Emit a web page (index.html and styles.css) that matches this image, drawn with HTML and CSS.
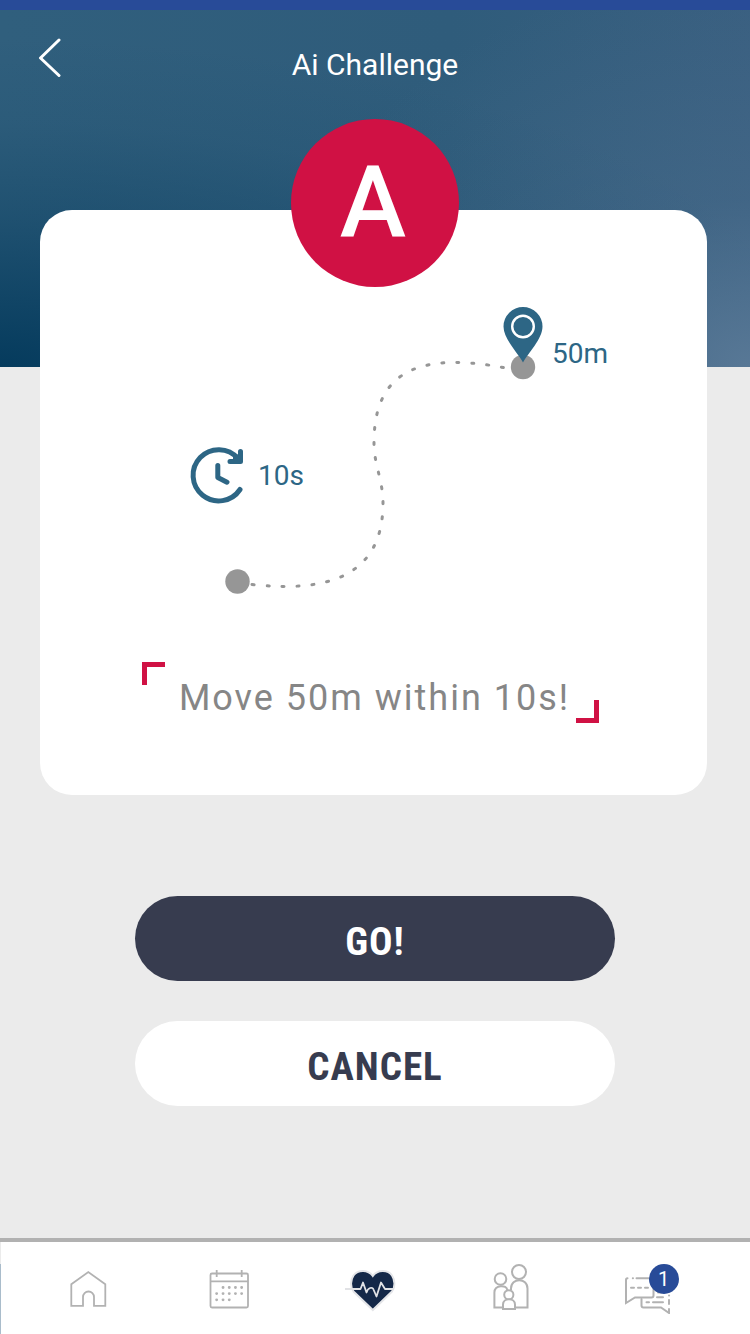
FILE: index.html
```html
<!DOCTYPE html>
<html lang="en">
<head>
<meta charset="utf-8">
<meta name="viewport" content="width=device-width, initial-scale=1">
<title>Ai Challenge</title>
<link rel="stylesheet" href="styles.css">
</head>
<body>
<div class="page">
  <header class="header">
    <button class="back" type="button" aria-label="Back">
      <svg width="24" height="40" viewBox="0 0 24 40"><path d="M22 2 3.500 20 22 37.500" fill="none" stroke="#fff" stroke-width="3" stroke-linecap="round" stroke-linejoin="round"/></svg>
    </button>
    <h1 class="title">Ai Challenge</h1>
  </header>

  <main class="main">
    <div class="grade">A</div>
    <section class="card">
      <svg class="route" viewBox="40 290 667 310" role="img" aria-label="Route of 50m in 10s">
        <path class="route-line" d="M252 584.500C330 593 383 575 383 503C383 480 374 465 374 443C374 385 402 347 508 368.500"/>
        <circle class="route-stop" cx="237.500" cy="581.500" r="12.200"/>
        <circle class="route-stop" cx="523" cy="367" r="12.200"/>
        <path class="accent-fill" d="M523 362.500C518 353 503.500 339 503.500 326.500A19.500 19.500 0 0 1 542.500 326.500C542.500 339 528 353 523 362.500Z"/>
        <circle cx="523" cy="326.500" r="10.800" fill="none" stroke="#fff" stroke-width="2.400"/>
        <g class="accent-line">
          <path d="M240 489.500A25.600 25.600 0 1 1 238 458.500"/>
          <path d="M240.500 451.500V461.500H230"/>
          <path d="M217.800 465.500V477.500L227 482.200"/>
        </g>
        <path class="accent-fill" d="M233 456 242 453V463H233Z"/>
        <text class="route-label" x="552" y="363">50m</text>
        <text class="route-label" x="258" y="485">10s</text>
      </svg>
      <p class="goal">
        <span class="corner corner-start"></span>
        <span class="goal-text">Move 50m within 10s!</span>
        <span class="corner corner-end"></span>
      </p>
    </section>
    <div class="actions">
      <button class="button button-primary" type="button">GO!</button>
      <button class="button button-plain" type="button">CANCEL</button>
    </div>
  </main>

  <nav class="nav">
    <a class="nav-item" href="#home" aria-label="Home">
      <svg width="50" height="50" viewBox="63 1264 50 50" class="icon"><path d="M71.300 1284.300 88.300 1272 105.300 1284.300V1305.800H94V1297A5.500 5.500 0 0 0 83 1297V1305.800H71.300Z"/></svg>
    </a>
    <a class="nav-item" href="#calendar" aria-label="Calendar">
      <svg width="50" height="50" viewBox="204 1264 50 50" class="icon">
        <rect x="210.500" y="1273.500" width="37.500" height="34" rx="1.500"/>
        <path d="M210.500 1281.300H248M216.700 1270V1277M241.700 1270V1277"/>
        <path class="dots" d="M223 1287.500h.1M229.200 1287.500h.1M235.400 1287.500h.1M241.600 1287.500h.1M216.600 1293.600h.1M223 1293.600h.1M229.200 1293.600h.1M235.400 1293.600h.1M241.600 1293.600h.1M216.600 1299.800h.1M223 1299.800h.1M229.200 1299.800h.1"/>
      </svg>
    </a>
    <a class="nav-item" href="#challenge" aria-label="Challenge" aria-current="page">
      <svg width="54" height="50" viewBox="343 1264 54 50">
        <path d="M372.800 1310 353.500 1291.500C350 1287 350.500 1280 353.500 1275.500C358 1269.500 368 1269.500 372.800 1276C377.500 1269.500 388 1269.500 392 1275.500C395 1280 395.500 1287 392 1291.500Z" fill="#142848" stroke="#e4e5e8" stroke-width="2"/>
        <path d="M345 1289H360.500L363 1282.500 366.500 1292.500C368 1287.500 372.500 1286.500 373.500 1289.500L376.500 1296.500 381 1282.500 385 1289H394" fill="none" stroke="#e1e2e5" stroke-width="1.800" stroke-linejoin="round"/>
      </svg>
    </a>
    <a class="nav-item" href="#family" aria-label="Family">
      <svg width="50" height="50" viewBox="486 1264 50 50" class="icon">
        <g>
          <circle cx="500.500" cy="1279" r="5.800"/>
          <circle cx="519" cy="1272" r="7"/>
          <path d="M503 1307.500H494.400V1292.500C494.400 1284.500 507 1284.500 507.300 1290M515.500 1307.500H527.500V1288.500C527.500 1277.500 511 1277.500 511 1288.500V1290"/>
          <circle cx="508.800" cy="1294.800" r="4.600" fill="#fff"/>
          <path fill="#fff" d="M503 1309V1304.500C503 1297.500 515 1297.500 515 1304.500V1309Z"/>
        </g>
      </svg>
    </a>
    <a class="nav-item" href="#messages" aria-label="Messages">
      <span class="chat">
        <svg width="56" height="50" viewBox="624 1264 56 50" class="icon">
          <g stroke-linecap="round">
            <path d="M627.500 1278.300Q626 1278.300 626 1280V1303L635 1297.500H651.500Q653.500 1297.500 653.500 1295.500V1287M632.800 1278.300h.2M636.500 1278.300H650"/>
            <path d="M631 1287.700h3M638 1287.700h3M645 1287.700h3"/>
            <path d="M641.500 1299V1305.500Q641.500 1307.500 643.500 1307.500H661L669 1313V1309M669 1304V1300M669 1295.500h.1M658 1292.500H662M668.500 1292V1290"/>
            <path d="M657 1297.300H663M646.500 1302.300H649M653 1302.300H663"/>
          </g>
        </svg>
        <span class="badge">1</span>
      </span>
    </a>
  </nav>
</div>
</body>
</html>
```
FILE: styles.css
```css
* {
  box-sizing: border-box;
}

body {
  margin: 0;
  font-family: Roboto, "Liberation Sans", sans-serif;
  background: #ebebeb;
}

.page {
  display: flex;
  flex-direction: column;
  min-height: 100vh;
  border-top: 10px solid #284b98;
  background:
    radial-gradient(ellipse 64% 400px at 100% 357px, #587896, rgba(88, 120, 150, 0.26) 42%, rgba(88, 120, 150, 0)) 0 0 / 100% 357px no-repeat,
    radial-gradient(ellipse 110% 330px at 0 357px, #053b5d, rgba(5, 59, 93, 0.38) 46%, rgba(5, 59, 93, 0.1) 74%, rgba(5, 59, 93, 0)) 0 0 / 100% 357px no-repeat,
    linear-gradient(90deg, #305f7d, #2f5c7b 60%, #395f80) 0 0 / 100% 357px no-repeat,
    #ebebeb;
}

.header {
  display: grid;
  grid-template-columns: 1fr auto 1fr;
  align-items: start;
  padding: 28px 37px 36px;
}

.back {
  justify-self: start;
  padding: 0;
  border: 0;
  background: none;
  cursor: pointer;
}

.back svg,
.route,
.icon {
  display: block;
}

.title {
  margin: 0;
  padding-top: 9px;
  font-size: 30px;
  font-weight: 400;
  line-height: 36px;
  color: #fff;
}

.main {
  display: flex;
  flex-direction: column;
  align-items: center;
}

.grade {
  z-index: 1;
  display: flex;
  align-items: center;
  justify-content: center;
  width: 168px;
  height: 168px;
  margin-bottom: -77px;
  padding-right: 4px;
  border-radius: 50%;
  background: #d01144;
  color: #fff;
  font-size: 100px;
  font-weight: 500;
  line-height: 100px;
}

.card {
  align-self: stretch;
  margin: 0 43px 0 40px;
  padding: 80px 0 72px;
  border-radius: 32px;
  background: #fff;
}

.route {
  width: 100%;
}

.route-line {
  fill: none;
  stroke: #969696;
  stroke-width: 3;
  stroke-linecap: round;
  stroke-dasharray: 2 13;
}

.route-stop {
  fill: #969696;
}

.route-label {
  fill: #2d6685;
  font-size: 28px;
}

.accent-fill {
  fill: #2d6685;
}

.accent-line {
  fill: none;
  stroke: #2d6685;
  stroke-width: 5;
  stroke-linecap: round;
  stroke-linejoin: round;
}

.goal {
  display: flex;
  justify-content: center;
  min-height: 61px;
  margin: 62px 0 0;
  padding-right: 6px;
}

.corner {
  flex: none;
  width: 23px;
  height: 23px;
  border: 0 solid #d01144;
}

.corner-start {
  border-width: 5px 0 0 5px;
}

.corner-end {
  align-self: flex-end;
  border-width: 0 5px 5px 0;
}

.goal-text {
  padding: 15px 6px 0 14px;
  color: #868686;
  font-size: 36px;
  line-height: 42px;
  letter-spacing: 2px;
}

.actions {
  display: flex;
  flex-direction: column;
  gap: 40px;
  width: 64%;
  margin: 101px 0 40px;
}

.button {
  padding: 23px 16px 16px;
  border: 0;
  border-radius: 43px;
  font-family: "Roboto Condensed", Roboto, sans-serif;
  font-size: 39px;
  font-weight: 700;
  line-height: 46px;
  letter-spacing: 1px;
  cursor: pointer;
}

.button-primary {
  background: #373c4f;
  color: #fff;
}

.button-plain {
  background: #fff;
  color: #373c4f;
}

.nav {
  display: grid;
  grid-template-columns: repeat(5, 1fr);
  align-items: center;
  margin-top: auto;
  padding: 21px 28px 19px 18px;
  border-top: 4px solid #b1b1b1;
  background:
    linear-gradient(#ebebeb 22px, #a9bccb 22px) 0 0 / 1px 100% no-repeat,
    #fff;
}

.nav-item {
  display: flex;
  justify-content: center;
  padding: 1px 0;
}

.icon {
  fill: none;
  stroke: #b2b2b2;
  stroke-width: 1.8px;
}

.icon g {
  stroke-width: 2px;
}

.dots {
  stroke-width: 2.8px;
  stroke-linecap: round;
}

.chat {
  position: relative;
}

.badge {
  position: absolute;
  top: 0;
  left: 25px;
  width: 30px;
  height: 30px;
  border-radius: 50%;
  background: #284b98;
  color: #fff;
  font-size: 20px;
  line-height: 30px;
  text-align: center;
}
```
